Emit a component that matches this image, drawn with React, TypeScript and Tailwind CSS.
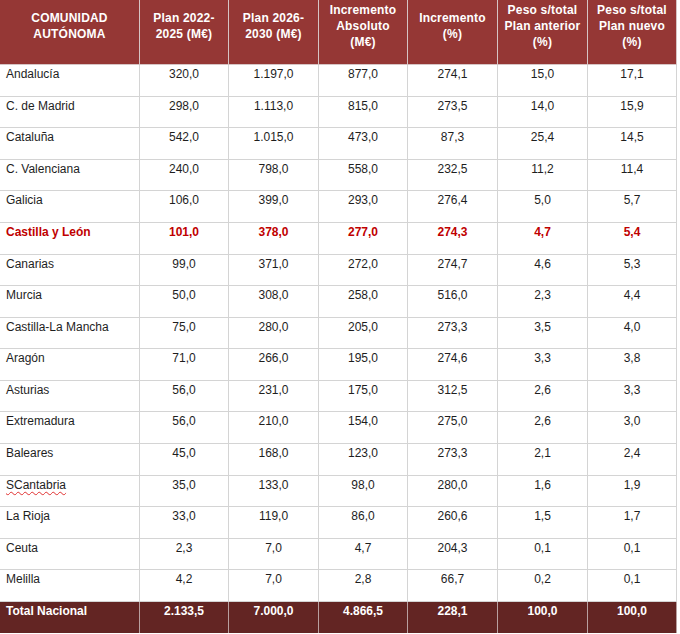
import React from "react";

const headers: string[][] = [
  ["COMUNIDAD", "AUTÓNOMA"],
  ["Plan 2022-", "2025 (M€)"],
  ["Plan 2026-", "2030 (M€)"],
  ["Incremento", "Absoluto", "(M€)"],
  ["Incremento", "(%)"],
  ["Peso s/total", "Plan anterior", "(%)"],
  ["Peso s/total", "Plan nuevo", "(%)"],
];

const rows: string[][] = [
  ["Andalucía", "320,0", "1.197,0", "877,0", "274,1", "15,0", "17,1"],
  ["C. de Madrid", "298,0", "1.113,0", "815,0", "273,5", "14,0", "15,9"],
  ["Cataluña", "542,0", "1.015,0", "473,0", "87,3", "25,4", "14,5"],
  ["C. Valenciana", "240,0", "798,0", "558,0", "232,5", "11,2", "11,4"],
  ["Galicia", "106,0", "399,0", "293,0", "276,4", "5,0", "5,7"],
  ["Castilla y León", "101,0", "378,0", "277,0", "274,3", "4,7", "5,4"],
  ["Canarias", "99,0", "371,0", "272,0", "274,7", "4,6", "5,3"],
  ["Murcia", "50,0", "308,0", "258,0", "516,0", "2,3", "4,4"],
  ["Castilla-La Mancha", "75,0", "280,0", "205,0", "273,3", "3,5", "4,0"],
  ["Aragón", "71,0", "266,0", "195,0", "274,6", "3,3", "3,8"],
  ["Asturias", "56,0", "231,0", "175,0", "312,5", "2,6", "3,3"],
  ["Extremadura", "56,0", "210,0", "154,0", "275,0", "2,6", "3,0"],
  ["Baleares", "45,0", "168,0", "123,0", "273,3", "2,1", "2,4"],
  ["SCantabria", "35,0", "133,0", "98,0", "280,0", "1,6", "1,9"],
  ["La Rioja", "33,0", "119,0", "86,0", "260,6", "1,5", "1,7"],
  ["Ceuta", "2,3", "7,0", "4,7", "204,3", "0,1", "0,1"],
  ["Melilla", "4,2", "7,0", "2,8", "66,7", "0,2", "0,1"],
];

const total = ["Total Nacional", "2.133,5", "7.000,0", "4.866,5", "228,1", "100,0", "100,0"];

export default function App() {
  return (
    <div
      className="w-[680px] h-[634px] bg-white overflow-hidden"
      style={{ fontFamily: '"Liberation Sans", Arial, sans-serif' }}
    >
      <div className="grid w-[677px] h-[633px] grid-cols-[140px_89px_90px_89px_90px_90px_89px] grid-rows-[65px_repeat(17,minmax(0,1fr))_31px] text-[12px]">
        {headers.map((h, i) => (
          <div
            key={"h" + i}
            className="bg-[#953735] border-r border-b border-[#d6c4c4] flex items-center justify-center pb-[13px] text-white font-bold text-center leading-[16px] tracking-[0.2px]"
          >
            <div>
              {h.map((l, j) => (
                <div key={j}>{l}</div>
              ))}
            </div>
          </div>
        ))}
        {rows.map((r, ri) => {
          const hl = r[0] === "Castilla y León";
          return r.map((c, ci) => (
            <div
              key={ri + "-" + ci}
              className={
                "border-r border-b border-[#d4d4d4] pt-[2px] leading-[14px] " +
                (ci === 0 ? "pl-[6px] text-left " : "text-center ") +
                (hl ? "text-[#c00000] font-bold" : "text-[#1e1e1e]")
              }
            >
              {c === "SCantabria" ? (
                <span className="underline decoration-wavy decoration-[#e03030] decoration-1 underline-offset-2">
                  {c}
                </span>
              ) : (
                c
              )}
            </div>
          ));
        })}
        {total.map((c, ci) => (
          <div
            key={"t" + ci}
            className={
              "bg-[#632523] border-r border-[#b8a0a0] pt-[2px] leading-[14px] text-white font-bold " +
              (ci === 0 ? "pl-[6px] text-left" : "text-center")
            }
          >
            {c}
          </div>
        ))}
      </div>
    </div>
  );
}
